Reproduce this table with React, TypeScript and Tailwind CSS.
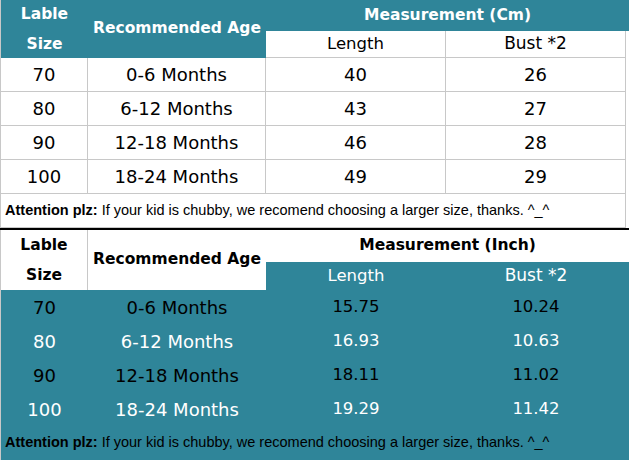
import React from "react";

const TEAL = "bg-[#2f8599]";

const top = [
  ["70", "0-6 Months", "40", "26"],
  ["80", "6-12 Months", "43", "27"],
  ["90", "12-18 Months", "46", "28"],
  ["100", "18-24 Months", "49", "29"],
];

const bottom = [
  ["70", "0-6 Months", "15.75", "10.24", "text-black"],
  ["80", "6-12 Months", "16.93", "10.63", "text-white"],
  ["90", "12-18 Months", "18.11", "11.02", "text-black"],
  ["100", "18-24 Months", "19.29", "11.42", "text-white"],
];

const font = { fontFamily: '"DejaVu Sans", sans-serif' } as const;

function Attention({ teal }: { teal?: boolean }) {
  return (
    <div
      className={`col-span-4 h-[34px] flex items-center pl-[4px] text-[14.5px] text-black ${
        teal ? "" : "bg-white border-b border-[#c8c8c8]"
      }`}
      style={{ fontFamily: '"Liberation Sans", Arial, sans-serif' }}
    >
      <span className="font-bold">Attention plz:</span>
      <span>&nbsp;If your kid is chubby, we recomend choosing a larger size, thanks. ^_^</span>
    </div>
  );
}

export default function App() {
  return (
    <div className="w-[629px] h-[463px] bg-white overflow-hidden" style={font}>
      {/* Top table */}
      <div className="grid grid-cols-[87px_178px_180px_180px] w-[626px] border-l border-[#c8c8c8]">
        <div className={`${TEAL} row-span-2 h-[58px] flex flex-col items-center justify-center text-white font-bold text-[15.5px] leading-[30px]`}>
          <span>Lable</span>
          <span>Size</span>
        </div>
        <div className={`${TEAL} row-span-2 h-[58px] flex items-center justify-center text-white font-bold text-[15.5px]`}>
          Recommended Age
        </div>
        <div className={`${TEAL} col-span-2 h-[31px] flex items-center justify-center text-white font-bold text-[15.5px] -mr-[3px]`}>
          Measurement (Cm)
        </div>
        <div className="h-[27px] flex items-center justify-center bg-white border-r border-b border-[#c8c8c8] text-[16.5px] text-black">
          Length
        </div>
        <div className="h-[27px] flex items-center justify-center bg-white border-r border-b border-[#c8c8c8] text-[17px] text-black">
          Bust *2
        </div>
        {top.map((r) =>
          r.map((c, i) => (
            <div
              key={r[0] + i}
              className="h-[34px] flex items-center justify-center border-r border-b border-[#c8c8c8] text-[18px] text-black"
            >
              {c}
            </div>
          ))
        )}
        <div className="col-span-4 border-r border-[#c8c8c8] grid grid-cols-1">
          <Attention />
        </div>
      </div>
      <div className="h-[2px] bg-black w-[629px]" />
      {/* Bottom table */}
      <div className={`grid grid-cols-[87px_178px_180px_180px] w-[629px] pr-[3px] ${TEAL} border-l border-[#c8c8c8]`}>
        <div className="row-span-2 h-[60px] bg-white border-r border-[#c8c8c8] flex flex-col items-center justify-center text-black font-bold text-[15.5px] leading-[30px]">
          <span>Lable</span>
          <span>Size</span>
        </div>
        <div className="row-span-2 h-[60px] bg-white flex items-center justify-center text-black font-bold text-[15.5px]">
          Recommended Age
        </div>
        <div className="col-span-2 h-[32px] bg-white flex items-center justify-center text-black font-bold text-[15.5px] -mr-[3px]">
          Measurement (Inch)
        </div>
        <div className="h-[28px] flex items-center justify-center text-white text-[16.5px]">Length</div>
        <div className="h-[28px] flex items-center justify-center text-white text-[17px]">Bust *2</div>
        {bottom.map((r) =>
          r.slice(0, 4).map((c, i) => (
            <div
              key={r[0] + i}
              className={`h-[34px] flex items-center justify-center ${r[4]} ${
                i >= 2 ? "text-[16.5px]" : "text-[18px]"
              }`}
            >
              {c}
            </div>
          ))
        )}
        <Attention teal />
      </div>
    </div>
  );
}
